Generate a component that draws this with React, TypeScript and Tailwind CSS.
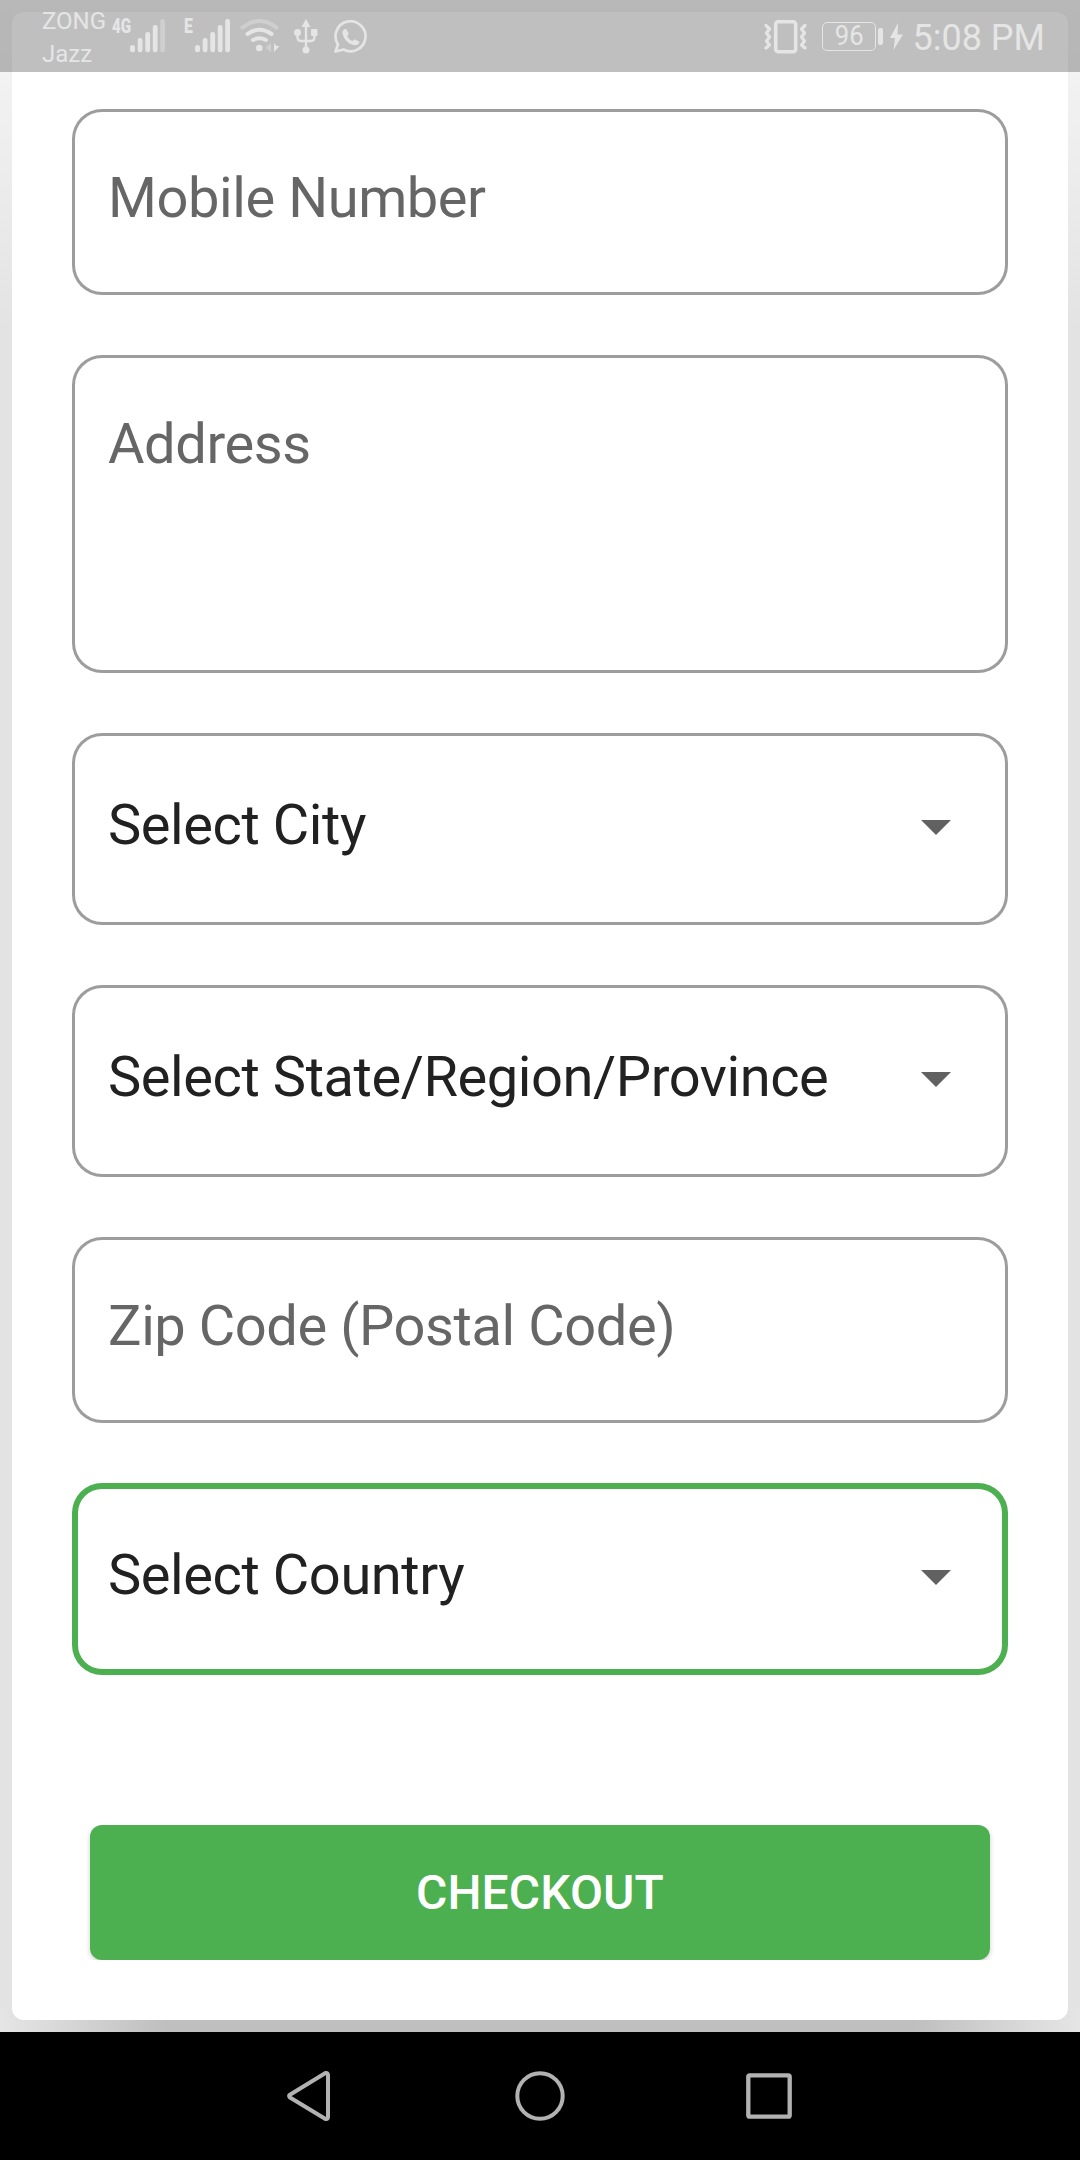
import React from "react";

type FieldProps = {
  label: string;
  kind: "input" | "textarea" | "select";
  focused?: boolean;
};

const heights = { input: "h-[186px]", textarea: "h-[318px]", select: "h-[192px]" };
const textTop = { input: "pt-[56px]", textarea: "pt-[56px]", select: "pt-[59px]" };

function Field({ label, kind, focused }: FieldProps) {
  return (
    <div
      className={`flex items-start justify-between rounded-[30px] pr-[57px] pl-9 ring-inset ${heights[kind]} ${textTop[kind]} ${
        focused ? "ring-[6px] ring-[#4caf50]" : "ring-[3px] ring-[#9d9d9d]"
      }`}
    >
      <span
        className={`text-[56px] leading-[66px] whitespace-nowrap tracking-[-0.42px] ${
          kind === "select" ? "text-[#212121]" : "text-[#666666]"
        }`}
      >
        {label}
      </span>
      {kind === "select" && (
        <svg className="mt-7 h-[15px] w-[30px]" viewBox="0 0 30 15">
          <path d="M0 0H30L15 15Z" fill="#616161" />
        </svg>
      )}
    </div>
  );
}

function Signal({ weakLast }: { weakLast?: boolean }) {
  return (
    <svg className="h-[34px] w-[36px]" viewBox="0 0 36 34" fill="#e5e5e5">
      <rect x="0" y="26" width="5" height="7.3" rx="2.5" />
      <rect x="7.7" y="19" width="4.8" height="14.3" rx="2.2" />
      <rect x="15.3" y="13" width="4.8" height="20.3" rx="2.2" />
      <rect x="22.8" y="6" width="4.8" height="27.3" rx="2.2" />
      <rect x="30.2" y="0" width="4.8" height="33.3" rx="2.2" fill={weakLast ? "#cfcfcf" : "#e5e5e5"} />
    </svg>
  );
}

function StatusBar() {
  return (
    <header className="absolute inset-x-0 top-0 z-10 flex h-[72px] items-start bg-black/25 text-[#e5e5e5]">
      <div className="ml-[42px] w-[68px] pt-[5px] text-[24px] leading-[33px]">
        <div>ZONG</div>
        <div>Jazz</div>
      </div>
      <span className="mt-[16px] ml-[2px] w-[18px] origin-left scale-x-[0.72] text-[21px] leading-[21px] font-black">4G</span>
      <div className="mt-[19px]">
        <Signal weakLast />
      </div>
      <span className="mt-[16px] ml-[18px] w-[11px] origin-left scale-x-[0.75] text-[21px] leading-[21px] font-black">E</span>
      <div className="mt-[19px]">
        <Signal />
      </div>
      <svg className="mt-[19px] ml-[9px] h-[34px] w-[40px]" viewBox="0 0 40 34" fill="none" strokeLinecap="round" strokeWidth="4">
        <path d="M2.5 8.500Q19.500-4.500 36.500 8.500" stroke="#cfcfcf" />
        <path d="M7.500 15Q19.500 6.500 31.500 15" stroke="#e5e5e5" />
        <path d="M13 21Q19.500 17.500 26 21" stroke="#e5e5e5" />
        <circle cx="19.300" cy="29" r="3.300" fill="#e5e5e5" />
        <path d="M31 24V33L25.500 29Z" fill="#cfcfcf" />
        <path d="M34 24V33L39.500 27H36.500Z" fill="#e5e5e5" />
      </svg>
      <svg className="mt-[19px] ml-[14px] h-[35px] w-[24px]" viewBox="0 0 24 35" fill="#e5e5e5">
        <path d="M12 0L16.500 8H7.500Z" />
        <path d="M12 6V29M3.500 14V18Q3.500 22 7 22H17Q20.500 22 20.500 18V14" fill="none" stroke="#e5e5e5" strokeWidth="2.400" />
        <circle cx="3.500" cy="13.500" r="3.500" />
        <rect x="17" y="10" width="6.500" height="7" rx="1" />
        <circle cx="12" cy="31" r="3.500" />
      </svg>
      <svg className="mt-[20px] ml-[16px] h-[34px] w-[34px]" viewBox="0 0 34 34">
        <path d="M1.500 31.500L4 24.500A15 15 0 1 1 9.500 29.500Z" fill="none" stroke="#e5e5e5" strokeWidth="2.700" strokeLinejoin="round" />
        <path d="M8.500 12C9 9.500 11 8.500 12.500 9.500L14.800 13.800L13.200 16.200C14.500 18.500 16 20 18.500 21L20.700 19.200L25 21.500C26 23 24 25 21.500 25.200C15 25.500 8 17.500 8.500 12Z" fill="#e5e5e5" />
      </svg>

      <svg className="mt-[20px] ml-auto h-[34px] w-[43px]" viewBox="0 0 43 34" fill="none" stroke="#e5e5e5">
        <rect x="11.700" y="1.700" width="20" height="30" rx="2.500" strokeWidth="3.600" />
        <path d="M2 5.500L5.500 9L2.500 13L5.500 17L2.500 21L5.500 25L2 28M41 5.500L37.500 9L40.500 13L37.500 17L40.500 21L37.500 25L41 28" strokeWidth="3.200" strokeLinejoin="round" strokeLinecap="round" />
      </svg>
      <div className="mt-[22px] ml-[15px] flex h-[29px] w-[54px] items-center justify-center rounded-[5px] border-[1.5px] border-[#e5e5e5] pl-px text-[27px] leading-[29px]">
        <span className="origin-center scale-x-[0.95]">96</span>
      </div>
      <div className="mt-[28px] ml-[2px] h-[17px] w-[5px] rounded-[2px] bg-[#e5e5e5]" />
      <svg className="mt-[23px] ml-[7px] h-[27px] w-[13px]" viewBox="0 0 13 27">
        <path d="M8 0L0 15H5L3.500 27L13 11.500H7.500Z" fill="#e5e5e5" />
      </svg>
      <span className="mt-[17px] mr-[35px] ml-[10px] text-[36px] leading-[42px] whitespace-nowrap">5:08 PM</span>
    </header>
  );
}

export default function App() {
  return (
    <div className="relative flex h-[2160px] w-[1080px] flex-col overflow-hidden bg-[#e3e3e3] font-[Roboto,sans-serif]">
      <StatusBar />
      <div className="relative flex h-[2032px] flex-col bg-[linear-gradient(to_bottom,#f6f6f6_0px,#f2f2f2_80px,#e3e3e3_330px,#e3e3e3_100%)] p-3">
        <div className="absolute inset-x-0 bottom-0 h-6 bg-[linear-gradient(to_right,#e5e5e5_0px,#dedede_35px,#bfbfbf_165px,#bfbfbf_915px,#dedede_1045px,#e5e5e5_1080px)]" />
        <main className="relative flex h-[2008px] flex-col rounded-xl bg-white px-[60px] pt-[97px]">
          <div className="flex flex-col gap-[60px]">
            <Field label="Mobile Number" kind="input" />
            <Field label="Address" kind="textarea" />
            <Field label="Select City" kind="select" />
            <Field label="Select State/Region/Province" kind="select" />
            <Field label="Zip Code (Postal Code)" kind="input" />
            <Field label="Select Country" kind="select" focused />
          </div>
          <button className="mx-[18px] mt-[150px] h-[135px] rounded-xl bg-[#4caf50] text-[48px] font-medium tracking-[0.1px] text-white shadow-[0_2px_5px_rgba(0,0,0,0.2)] [clip-path:inset(0_-8px_0_-8px)]">
            CHECKOUT
          </button>
        </main>
      </div>
      <nav className="flex h-32 items-center bg-black pl-[286px]">
        <svg className="h-[52px] w-[46px]" viewBox="0 0 46 52" fill="none" stroke="#b2b2b2" strokeWidth="4" strokeLinejoin="round">
          <path d="M3.500 25L39.500 3Q42 2.500 42 5V47Q42 49.500 39.500 49L4 27.500Q2.500 26 3.500 25Z" />
        </svg>
        <svg className="ml-[183px] h-[50px] w-[50px]" viewBox="0 0 50 50" fill="none" stroke="#b2b2b2" strokeWidth="4">
          <circle cx="25" cy="25" r="22.700" />
        </svg>
        <svg className="ml-[181px] h-[46px] w-[46px]" viewBox="0 0 46 46" fill="none" stroke="#b2b2b2" strokeWidth="4.300">
          <rect x="2.300" y="2.300" width="41.400" height="41.400" rx="1.500" />
        </svg>
      </nav>
    </div>
  );
}
